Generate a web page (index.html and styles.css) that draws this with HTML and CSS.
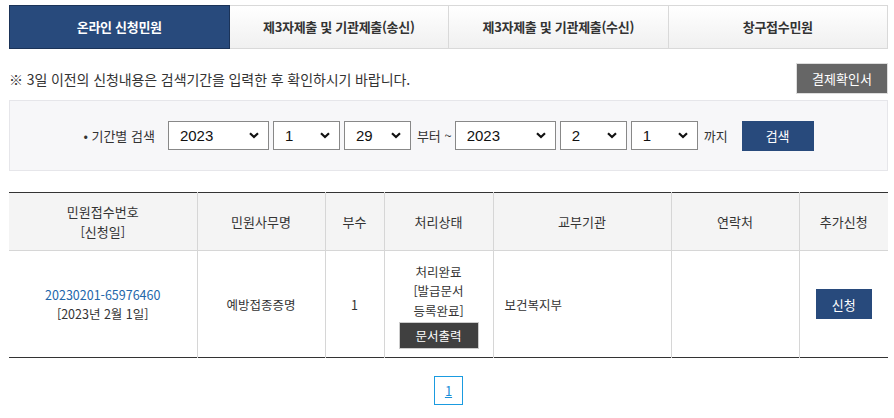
FILE: index.html
```html
<!DOCTYPE html>
<html lang="ko">
<head>
    <meta charset="UTF-8">
    <meta name="viewport" content="width=device-width, initial-scale=1.0">
    <title>신청민원 조회</title>
    <link rel="stylesheet" href="styles.css">
</head>
<body>
    <div class="page">
        <!-- 탭 메뉴 -->
        <ul class="tabs">
            <li class="tab active">온라인 신청민원</li>
            <li class="tab">제3자제출 및 기관제출(송신)</li>
            <li class="tab">제3자제출 및 기관제출(수신)</li>
            <li class="tab">창구접수민원</li>
        </ul>

        <div class="notice-row">
            <p class="notice">※ 3일 이전의 신청내용은 검색기간을 입력한 후 확인하시기 바랍니다.</p>
            <button class="btn-gray">결제확인서</button>
        </div>

        <!-- 기간 검색 -->
        <div class="search-box">
            <span class="search-label">• 기간별 검색</span>
            <span class="sel sel-year">
                <select><option>2023</option></select>
                <svg viewBox="0 0 10 7" class="arrow"><path d="M1 1.2 L5 5 L9 1.2" /></svg>
            </span>
            <span class="sel">
                <select><option>1</option></select>
                <svg viewBox="0 0 10 7" class="arrow"><path d="M1 1.2 L5 5 L9 1.2" /></svg>
            </span>
            <span class="sel">
                <select><option>29</option></select>
                <svg viewBox="0 0 10 7" class="arrow"><path d="M1 1.2 L5 5 L9 1.2" /></svg>
            </span>
            <span class="search-text">부터 ~</span>
            <span class="sel sel-year">
                <select><option>2023</option></select>
                <svg viewBox="0 0 10 7" class="arrow"><path d="M1 1.2 L5 5 L9 1.2" /></svg>
            </span>
            <span class="sel">
                <select><option>2</option></select>
                <svg viewBox="0 0 10 7" class="arrow"><path d="M1 1.2 L5 5 L9 1.2" /></svg>
            </span>
            <span class="sel">
                <select><option>1</option></select>
                <svg viewBox="0 0 10 7" class="arrow"><path d="M1 1.2 L5 5 L9 1.2" /></svg>
            </span>
            <span class="search-text">까지</span>
            <button class="btn-navy btn-search">검색</button>
        </div>

        <!-- 목록 -->
        <table class="list">
            <colgroup>
                <col style="width: 188px">
                <col style="width: 128px">
                <col style="width: 59px">
                <col style="width: 109px">
                <col style="width: 178px">
                <col style="width: 128px">
                <col style="width: 89px">
            </colgroup>
            <thead>
                <tr>
                    <th>민원접수번호<br>[신청일]</th>
                    <th>민원사무명</th>
                    <th>부수</th>
                    <th>처리상태</th>
                    <th>교부기관</th>
                    <th>연락처</th>
                    <th>추가신청</th>
                </tr>
            </thead>
            <tbody>
                <tr>
                    <td><a href="#" class="doc-no">20230201-65976460</a><br>[2023년 2월 1일]</td>
                    <td>예방접종증명</td>
                    <td>1</td>
                    <td class="status">처리완료<br>[발급문서<br>등록완료]<br><button class="btn-dark">문서출력</button></td>
                    <td class="left">보건복지부</td>
                    <td></td>
                    <td><button class="btn-navy btn-apply">신청</button></td>
                </tr>
            </tbody>
        </table>

        <div class="paging">
            <a href="#" class="page-num">1</a>
        </div>
    </div>
</body>
</html>
```

FILE: styles.css
```css
body {
    margin: 0;
    font-family: "Noto Sans CJK KR", "Noto Sans", sans-serif;
    font-size: 13px;
    color: #333;
    background-color: #fff;
}
.page {
    width: 879px;
    padding: 5px 0 0 9px;
}
button {
    font-family: inherit;
    border: none;
    cursor: pointer;
}

/* 탭 */
.tabs {
    display: flex;
    margin: 0;
    padding: 0;
    list-style: none;
}
.tab {
    flex: 1;
    height: 42px;
    line-height: 42px;
    text-align: center;
    font-size: 13px;
    font-weight: bold;
    letter-spacing: -0.3px;
    color: #333;
    border: 1px solid #d9d9d9;
    border-left: none;
    background: linear-gradient(#fff, #f0f0f0);
}
.tab.active {
    color: #fff;
    background: #284a7c;
    border: 1px solid #1b3358;
}

/* 안내문 */
.notice-row {
    display: flex;
    justify-content: space-between;
    align-items: center;
    margin-top: 14px;
}
.notice {
    margin: 0;
    font-size: 14px;
    letter-spacing: -0.1px;
}
.btn-gray {
    width: 92px;
    height: 31px;
    font-size: 13px;
    color: #fff;
    background-color: #666;
    border: 1px solid #ddd;
}

/* 검색 */
.search-box {
    display: flex;
    align-items: center;
    justify-content: center;
    height: 69px;
    margin-top: 6px;
    border: 1px solid #e6e6ea;
    background-color: #f7f7f9;
}
.search-label {
    margin-right: 13px;
}
.search-text {
    margin: 0 3px 0 2px;
}
.sel {
    position: relative;
    display: inline-block;
    width: 67px;
    height: 29px;
    margin-right: 4px;
}
.sel-year {
    width: 101px;
}
.sel select {
    appearance: none;
    width: 100%;
    height: 100%;
    padding: 0 0 0 11px;
    font-family: "Liberation Sans", Arial, sans-serif;
    font-size: 15px;
    color: #111;
    background-color: #fff;
    border: 1px solid #888;
    border-radius: 0;
}
.sel .arrow {
    position: absolute;
    top: 11px;
    right: 10px;
    width: 10px;
    height: 7px;
    fill: none;
    stroke: #111;
    stroke-width: 2.2;
    pointer-events: none;
}
.btn-navy {
    color: #fff;
    background-color: #284a7c;
    font-size: 13px;
}
.btn-search {
    width: 72px;
    height: 30px;
    margin-left: 11px;
}

/* 목록 테이블 */
.list {
    width: 879px;
    margin-top: 21px;
    border-collapse: collapse;
    table-layout: fixed;
    border-top: 1px solid #333;
    border-bottom: 1px solid #333;
}
.list th {
    height: 57px;
    padding: 0;
    font-weight: normal;
    line-height: 20px;
    background-color: #f4f4f4;
    border-bottom: 1px solid #d6d6d6;
}
.list th + th,
.list td + td {
    border-left: 1px solid #d6d6d6;
}
.list td {
    height: 103px;
    padding: 0;
    text-align: center;
    line-height: 19px;
    font-size: 12.5px;
}
.list td.left {
    text-align: left;
    padding-left: 11px;
}
.list td.status {
    line-height: 19.5px;
    padding-top: 3px;
}
.doc-no {
    color: #2266aa;
    text-decoration: none;
}
.btn-dark {
    width: 80px;
    height: 27px;
    margin-top: 2px;
    font-size: 12.5px;
    color: #fff;
    background-color: #404040;
    border: 1px solid #ccc;
}
.btn-apply {
    width: 56px;
    height: 30px;
}

/* 페이지 */
.paging {
    display: flex;
    justify-content: center;
    margin-top: 18px;
}
.page-num {
    display: block;
    width: 27px;
    height: 27px;
    line-height: 27px;
    text-align: center;
    color: #1a8fd8;
    border: 1px solid #1a9be0;
    font-size: 13px;
}
```
